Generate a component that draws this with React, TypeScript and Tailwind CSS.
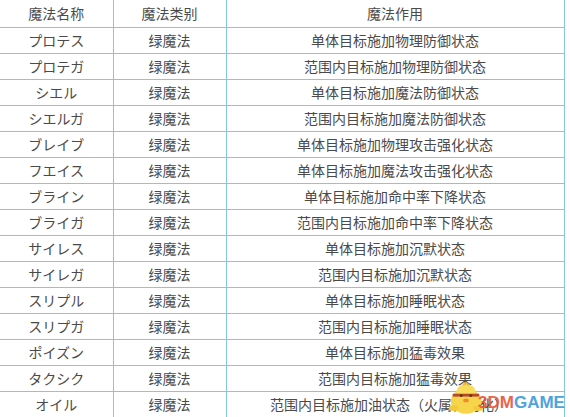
import React from "react";

const rows: [string, string, string][] = [
  ["プロテス", "绿魔法", "单体目标施加物理防御状态"],
  ["プロテガ", "绿魔法", "范围内目标施加物理防御状态"],
  ["シエル", "绿魔法", "单体目标施加魔法防御状态"],
  ["シエルガ", "绿魔法", "范围内目标施加魔法防御状态"],
  ["ブレイブ", "绿魔法", "单体目标施加物理攻击强化状态"],
  ["フエイス", "绿魔法", "单体目标施加魔法攻击强化状态"],
  ["ブライン", "绿魔法", "单体目标施加命中率下降状态"],
  ["ブライガ", "绿魔法", "范围内目标施加命中率下降状态"],
  ["サイレス", "绿魔法", "单体目标施加沉默状态"],
  ["サイレガ", "绿魔法", "范围内目标施加沉默状态"],
  ["スリプル", "绿魔法", "单体目标施加睡眠状态"],
  ["スリプガ", "绿魔法", "范围内目标施加睡眠状态"],
  ["ポイズン", "绿魔法", "单体目标施加猛毒效果"],
  ["タクシク", "绿魔法", "范围内目标施加猛毒效果"],
  ["オイル", "绿魔法", "范围内目标施加油状态（火属性弱化）"],
];

export default function App() {
  return (
    <div
      className="relative w-[570px] h-[417px] overflow-hidden bg-white text-[#4a4a4a] text-[14px]"
      style={{ fontFamily: '"Noto Sans CJK SC", "Noto Sans", sans-serif' }}
    >
      <table className="border-collapse table-fixed w-[564px]">
        <colgroup>
          <col className="w-[113px]" />
          <col className="w-[113px]" />
          <col className="w-[338px]" />
        </colgroup>
        <tbody>
          <tr className="h-[27px]">
            <td className="border-r border-b border-[#86c5ea] text-center leading-none p-0">魔法名称</td>
            <td className="border-r border-b border-[#86c5ea] text-center leading-none p-0">魔法类别</td>
            <td className="border-r border-b border-[#86c5ea] text-center leading-none p-0">魔法作用</td>
          </tr>
          {rows.map((r, i) => (
            <tr key={i} className="h-[26px]">
              <td className="border-r border-b border-[#86c5ea] text-center leading-none p-0">{r[0]}</td>
              <td className="border-r border-b border-[#86c5ea] text-center leading-none p-0">{r[1]}</td>
              <td className="border-r border-b border-[#86c5ea] text-center leading-none p-0 whitespace-nowrap">
                <span className={i === 14 ? "relative left-[-6px]" : ""}>{r[2]}</span>
              </td>
            </tr>
          ))}
        </tbody>
      </table>

      <svg className="absolute left-[447px] top-[382px]" width="38" height="33" viewBox="0 0 40 34">
        <ellipse cx="20" cy="20" rx="16" ry="13" fill="#f7d54a" />
        <ellipse cx="20" cy="9" rx="10" ry="7" fill="#f9dc5c" />
        <path d="M17 3 Q20 -1 23 3" stroke="#e8b830" strokeWidth="2" fill="none" />
        <rect x="6" y="12" width="28" height="3" fill="#b44a2a" />
        <circle cx="15" cy="14" r="1.5" fill="#5a3a1a" />
        <circle cx="25" cy="14" r="1.5" fill="#5a3a1a" />
        <ellipse cx="20" cy="19" rx="3" ry="2" fill="#f08a2a" />
        <ellipse cx="7" cy="27" rx="5" ry="3" fill="#f2c93a" />
        <ellipse cx="33" cy="27" rx="5" ry="3" fill="#f2c93a" />
      </svg>
      <div
        className="absolute left-[478px] top-[394px] text-[17px] font-bold leading-none opacity-90 whitespace-nowrap"
        style={{ fontFamily: '"Liberation Sans", Arial, sans-serif' }}
      >
        <span className="text-[#e8543a]">3DM</span>
        <span className="text-[#3a9ad9]">GAME</span>
      </div>
    </div>
  );
}
